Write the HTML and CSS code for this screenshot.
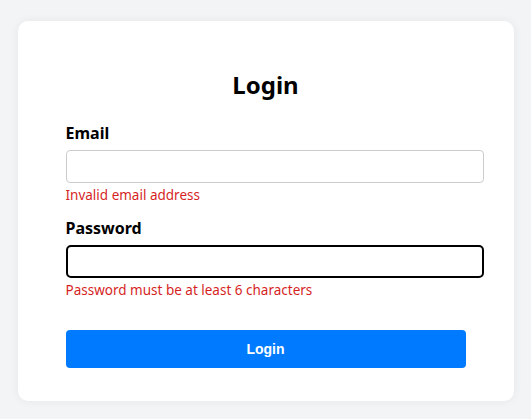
FILE: index.html
```html
<!DOCTYPE html>
<html lang="en">
<head>
  <meta charset="UTF-8" />
  <meta name="viewport" content="width=device-width, initial-scale=1.0"/>
  <title>Login</title>
  <link rel="stylesheet" href="styles.css">
</head>
<body>

  <!-- Login Card -->
  <div class="login-card">
    <h2>Login</h2>

    <form class="login-form" onsubmit="return false">
      <div class="form-group">
        <label for="email">Email</label>
        <input type="text" id="email" class="form-input">
        <p class="error">Invalid email address</p>
      </div>

      <div class="form-group">
        <label for="password">Password</label>
        <input type="password" id="password" class="form-input focused">
        <p class="error">Password must be at least 6 characters</p>
      </div>

      <button type="submit" class="login-btn">Login</button>
    </form>
  </div>

</body>
</html>
```

FILE: styles.css
```css
body {
  margin: 0;
  padding: 21px 0 18px;
  font-family: 'Noto Sans', sans-serif;
  background-color: #f3f4f6;
  color: #000;
}

.login-card {
  width: 400px;
  margin: 0 auto;
  padding: 47px 48px 33px;
  background-color: #fff;
  border-radius: 10px;
  box-shadow: 0 0 10px rgba(0, 0, 0, 0.06);
}

h2 {
  margin: 0 0 21px;
  font-size: 24px;
  text-align: center;
}

.form-group {
  margin-bottom: 12px;
}

label {
  display: block;
  margin-bottom: 6px;
  font-weight: bold;
  font-size: 16px;
}

.form-input {
  display: block;
  width: 100%;
  height: 15px;
  padding: 8px;
  border: 1px solid #ccc;
  border-radius: 4px;
  font-size: 16px;
}

.form-input.focused {
  padding: 7px;
  border: 2px solid #000;
  border-radius: 5px;
}

.error {
  margin: 3px 0 0;
  color: #d61f1f;
  font-size: 13.5px;
  line-height: 19px;
}

.login-btn {
  display: block;
  width: 100%;
  margin-top: 30px;
  padding: 11px;
  background-color: #007bff;
  color: #fff;
  border: none;
  border-radius: 4px;
  font-family: 'Liberation Sans', Arial, sans-serif;
  font-size: 14px;
  font-weight: bold;
  line-height: 16px;
  cursor: pointer;
}
```
